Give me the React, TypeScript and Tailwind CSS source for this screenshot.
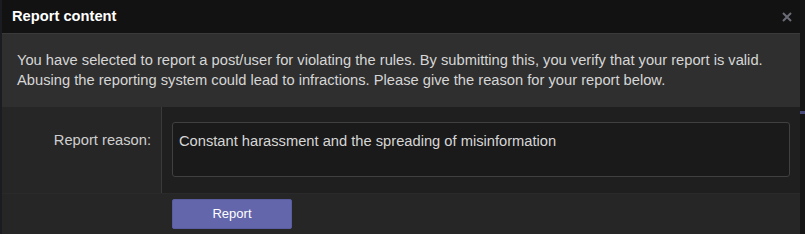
import React from 'react';

export default function App() {
  return (
    <div
      className="flex h-[234px] w-[805px] overflow-hidden bg-[#17171b]"
      style={{ fontFamily: '"Liberation Sans", Arial, sans-serif' }}
    >
      <div className="w-[2px] bg-[#1b1b22]" />
      <div className="flex w-[798px] flex-col">
        <div className="flex h-[34px] items-center justify-between border-b border-[#3a3a3a] bg-[#121212] pl-[10px] pr-[8px]">
          <h2 className="text-[14.7px] font-bold text-white">Report content</h2>
          <button className="flex h-[10px] w-[10px] items-center justify-center">
            <svg width="10" height="10" viewBox="0 0 10 10">
              <path d="M1 1L9 9M9 1L1 9" stroke="#6c6c78" strokeWidth="2" />
            </svg>
          </button>
        </div>
        <div className="h-[73px] bg-[#2f2f2f] px-[15px] pt-[16px] text-[14.7px] leading-[20px] text-[#d6d6d6]">
          <p>
            You have selected to report a post/user for violating the rules. By submitting this, you verify that your report is valid.
            Abusing the reporting system could lead to infractions. Please give the reason for your report below.
          </p>
        </div>
        <div className="flex h-[86px] bg-[#1f1f1f]">
          <div className="w-[160px] border-r border-[#3a3a3a] bg-[#262626] pr-[10px] pt-[22px] text-right text-[14.7px] text-[#cfcfcf]">
            Report reason:
          </div>
          <div className="flex-1 pl-[10px] pr-[10px] pt-[15px]">
            <div className="h-[55px] w-full rounded-[3px] border border-[#404040] bg-[#1a1a1a] px-[6px] pt-[7px] text-[14.7px] text-[#d6d6d6]">
              Constant harassment and the spreading of misinformation
            </div>
          </div>
        </div>
        <div className="flex flex-1 border-t border-[#2a2a2a] bg-[#262626] pl-[170px] pt-[5px]">
          <button className="h-[30px] w-[120px] rounded-[2px] border border-[#5a5ca0] bg-[#6466ab] text-[13px] text-white">
            Report
          </button>
        </div>
      </div>
      <div className="flex w-[5px] flex-col bg-[#151515]">
        <div className="mt-[111px] h-[3px] bg-[#4a4a7a]" />
      </div>
    </div>
  );
}
